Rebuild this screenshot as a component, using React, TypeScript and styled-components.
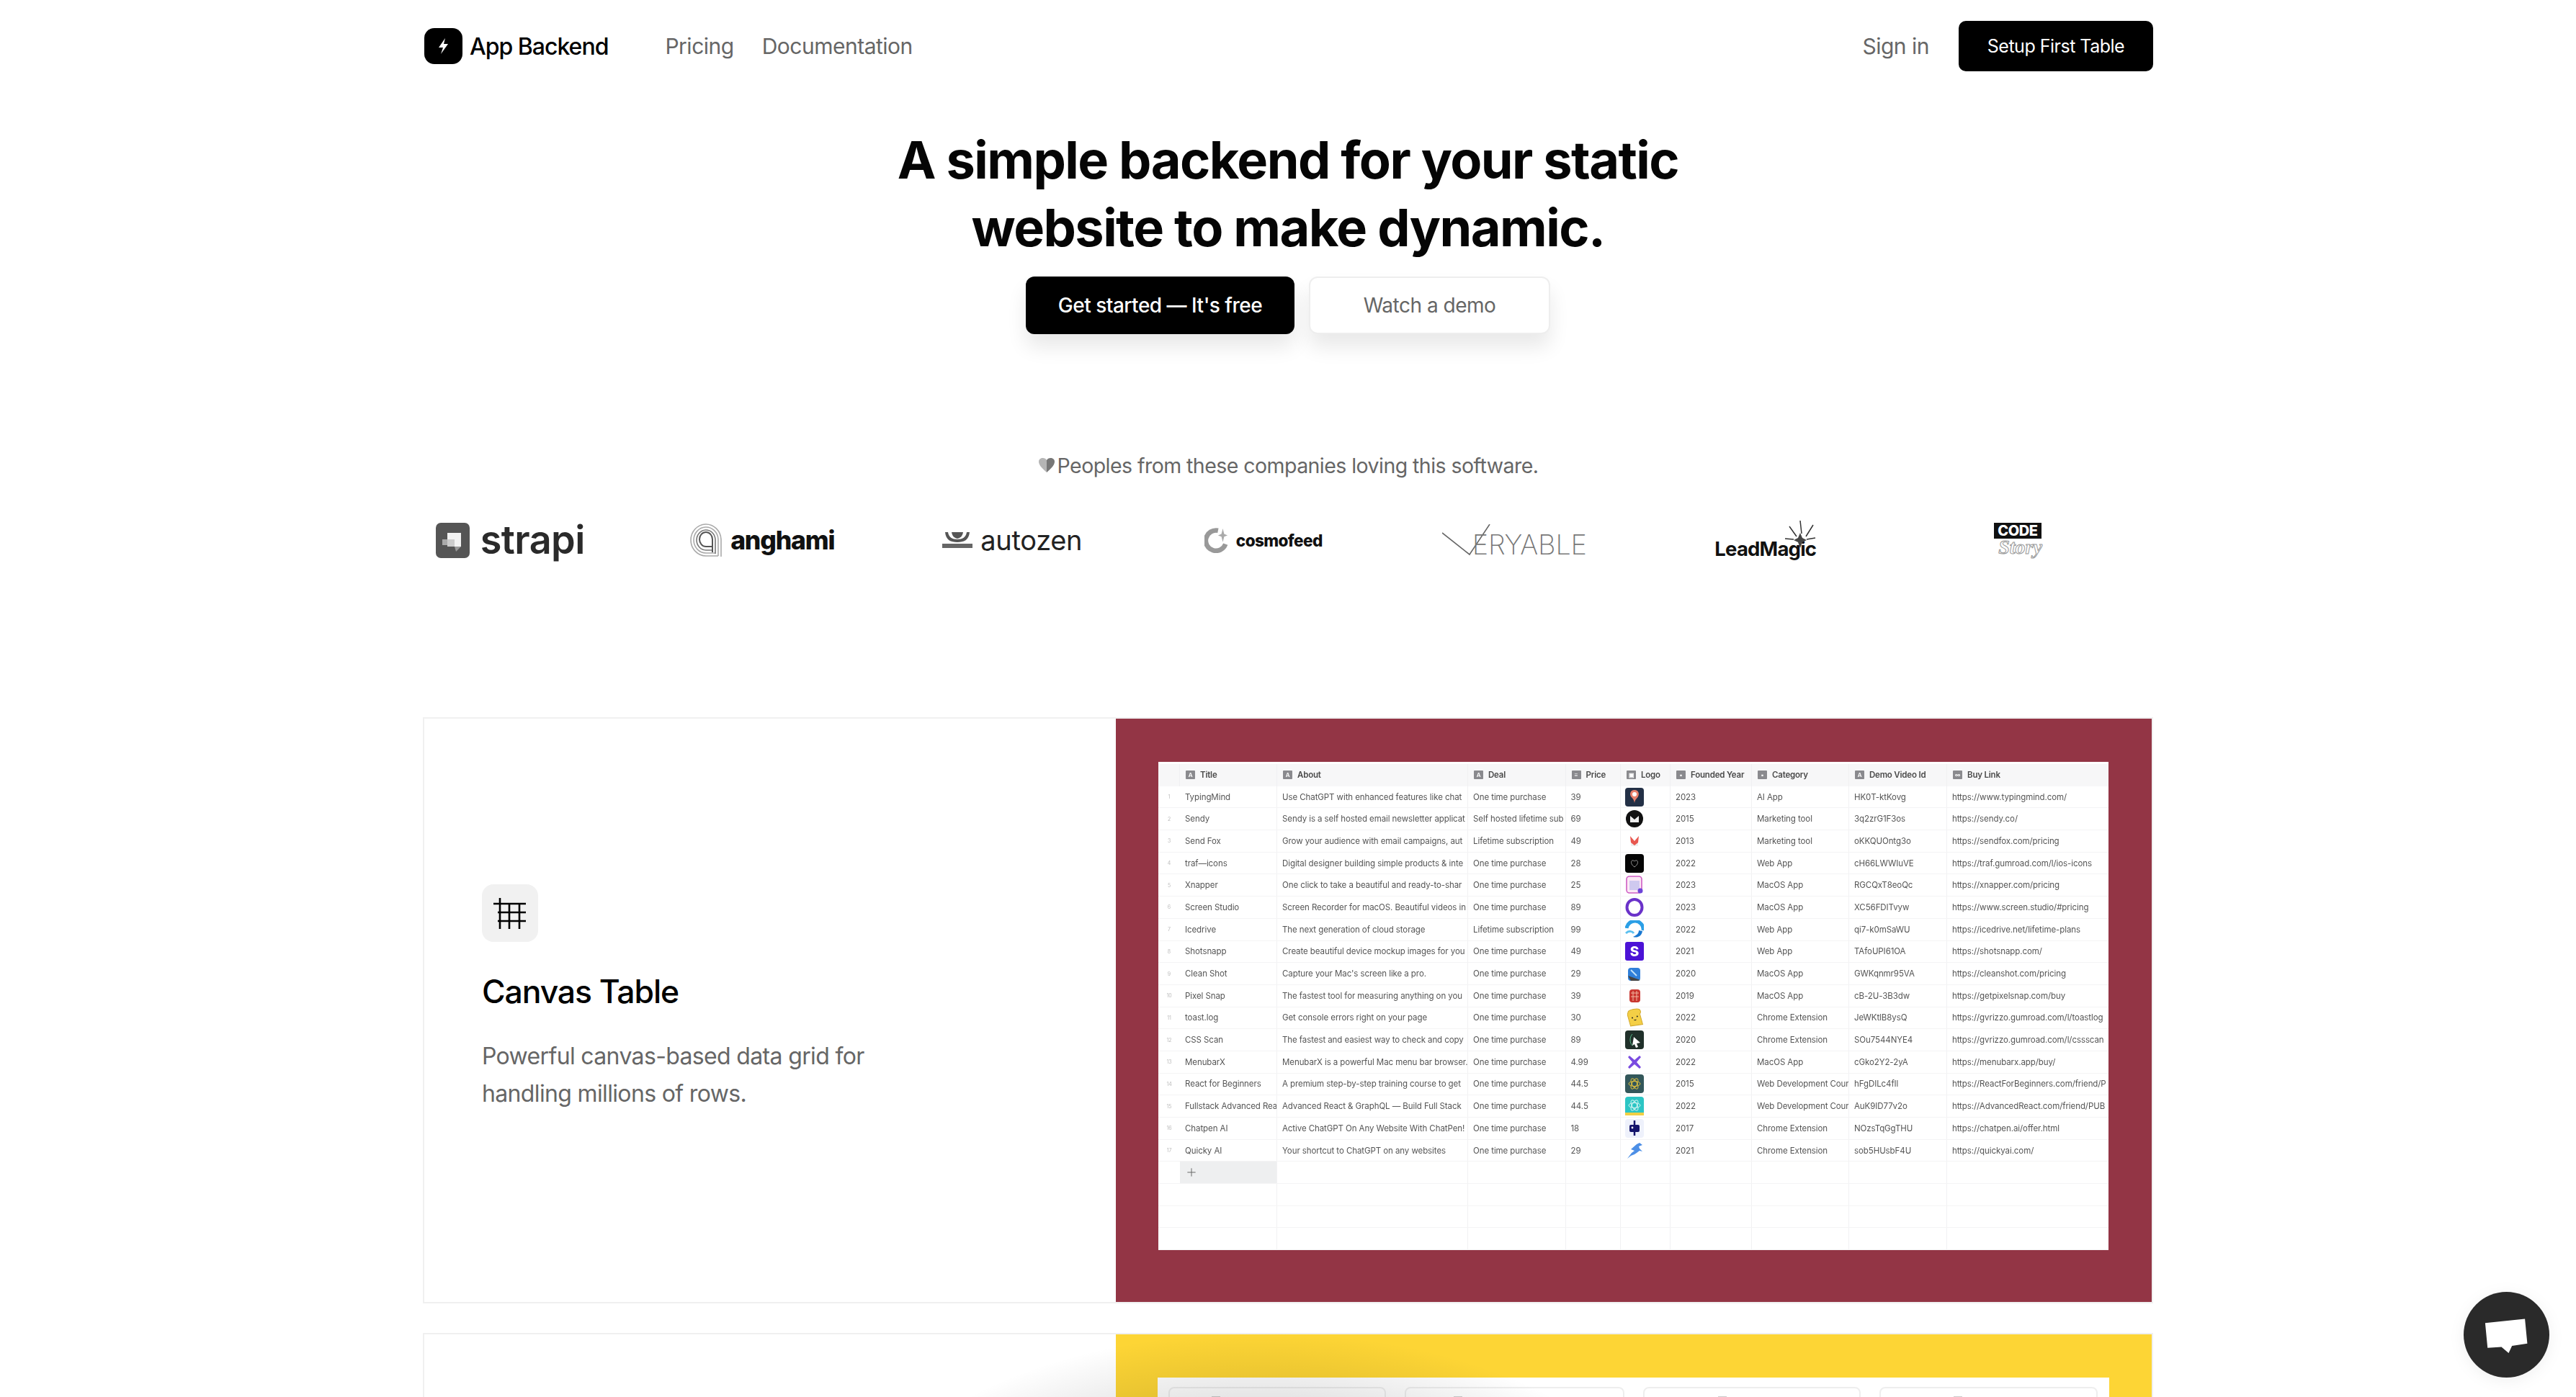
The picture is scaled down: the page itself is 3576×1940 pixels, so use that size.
import React from "react";
import styled, { createGlobalStyle } from "styled-components";
import { Plus } from "lucide-react";

const Global = createGlobalStyle`
  html, body { margin: 0; padding: 0; background: #fff; overflow: hidden; }
  * { box-sizing: border-box; }
  body { font-family: Inter, "Noto Sans", sans-serif; color: #000; }
`;

const Page = styled.div`
  height: 1940px;
  overflow: hidden;
  position: relative;
`;
const Container = styled.div`
  width: 2402px;
  margin: 0 0 0 587px;
`;
const Nav = styled.nav`
  height: 99px;
  padding: 29px 0 0 2px;
  display: flex;
  align-items: flex-start;
`;
const Brand = styled.div`
  display: flex;
  align-items: center;
  gap: 10px;
  height: 70px;
`;
const BrandName = styled.span`
  font-size: 32px;
  font-weight: 500;
  letter-spacing: -1px;
`;
const NavLinks = styled.div`
  display: flex;
  gap: 39px;
  margin-left: 79px;
  height: 70px;
  align-items: center;
`;
const NavLink = styled.a`
  font-size: 30px;
  color: #666;
  font-weight: 400;
  letter-spacing: -0.5px;
`;
const NavRight = styled.div`
  margin-left: auto;
  display: flex;
  align-items: center;
  gap: 41px;
`;
const NavButton = styled.button`
  height: 70px;
  width: 270px;
  border: 0;
  border-radius: 10px;
  background: #000;
  color: #fff;
  font: 400 25px Inter, sans-serif;
  letter-spacing: -0.5px;
`;
const Hero = styled.header`
  margin-top: 76px;
  display: flex;
  flex-direction: column;
  align-items: center;
`;
const Heading = styled.h1`
  margin: 0;
  font-size: 72px;
  line-height: 94px;
  font-weight: 700;
  text-align: center;
  letter-spacing: -1.55px;
  color: #050505;
`;
const HeroActions = styled.div`
  display: flex;
  gap: 20px;
  margin-top: 21px;
`;
const HeroButton = styled.button<{ $primary?: boolean }>`
  height: 80px;
  width: ${(p) => (p.$primary ? "373px" : "335px")};
  border-radius: 12px;
  font: ${(p) => (p.$primary ? 500 : 400)} 28px Inter, sans-serif;
  letter-spacing: -0.5px;
  background: ${(p) => (p.$primary ? "#000" : "#fff")};
  color: ${(p) => (p.$primary ? "#fff" : "#666")};
  border: ${(p) => (p.$primary ? "0" : "2px solid #eee")};
  box-shadow: 0 18px 28px rgba(0, 0, 0, 0.09);
`;
const Loved = styled.p`
  margin: 160px 0 0;
  height: 44px;
  display: flex;
  align-items: center;
  justify-content: center;
  font-size: 28.5px;
  color: #666;
  letter-spacing: -0.55px;
`;
const LogoRow = styled.div`
  margin: 32px 0 0 -53px;
  display: grid;
  grid-template-columns: repeat(7, 348.5px);
  height: 100px;
  align-items: center;
  justify-items: center;
`;
const LogoItem = styled.div`
  display: flex;
  align-items: center;
  position: relative;
`;
const StrapiText = styled.span`
  font: 600 54px Inter, sans-serif;
  letter-spacing: -0.6px;
  color: #2a2a2a;
  margin-left: 15px;
  line-height: 50px;
`;
const AnghamiText = styled.span`
  font: 800 35.5px Inter, sans-serif;
  letter-spacing: -1.2px;
  color: #111;
  margin-left: 9px;
`;
const AutozenText = styled.span`
  font: 400 38px Inter, sans-serif;
  letter-spacing: -0.3px;
  color: #222;
  margin-left: 11px;
`;
const CosmoText = styled.span`
  font: 800 22.5px Inter, sans-serif;
  letter-spacing: -0.6px;
  color: #111;
  margin-left: 10px;
`;
const VeryText = styled.span`
  font: 200 38px Inter, sans-serif;
  letter-spacing: -0.2px;
  color: #777;
  margin-left: -25px;
  margin-top: 12px;
`;
const LeadText = styled.span`
  font: 700 27.5px Inter, sans-serif;
  letter-spacing: -0.8px;
  color: #111;
  margin-top: 24px;
`;
const Spark = styled.svg`
  position: absolute;
  right: 0;
  top: 2px;
`;
const CodeStack = styled.div`
  display: flex;
  flex-direction: column;
  align-items: flex-start;
  width: 62px;
`;
const CodeBox = styled.span`
  background: #111;
  color: #fff;
  font: 800 20px Inter, sans-serif;
  line-height: 22px;
  padding: 0 5px;
  letter-spacing: -0.4px;
`;
const StoryText = styled.span`
  font: italic 700 28px "Liberation Serif", serif;
  line-height: 28px;
  color: #fff;
  -webkit-text-stroke: 1px #999;
  margin: -2px 0 0 6px;
`;
const Card = styled.section<{ $gap?: boolean }>`
  margin-top: ${(p) => (p.$gap ? "41px" : "196px")};
  border: 2px solid #f0f0f0;
  display: grid;
  grid-template-columns: 960px 1438px;
`;
const CardText = styled.div`
  padding: 230px 0 0 80px;
`;
const IconTile = styled.div`
  width: 78px;
  height: 80px;
  border-radius: 16px;
  background: #f1f1f1;
`;
const CardTitle = styled.h2`
  margin: 40px 0 0;
  font-size: 44.5px;
  line-height: 58px;
  font-weight: 500;
  letter-spacing: -1.1px;
`;
const CardDesc = styled.p`
  margin: 35px 0 0;
  font-size: 32px;
  line-height: 52px;
  color: #666;
  letter-spacing: -0.65px;
`;
const RedPane = styled.div`
  background: #933545;
  padding: 60px 60px 72px 59px;
`;
const Table = styled.div`
  background: #fff;
  height: 678px;
  overflow: hidden;
  padding-top: 3px;
  font-size: 11.5px;
  color: #555;
  filter: blur(0.3px);
`;
const COLS = "30px 135px 265px 135.5px 76.5px 69px 113px 135px 136px 225px";
const HeadRow = styled.div`
  display: grid;
  grid-template-columns: ${COLS};
  height: 30.7px;
  background: #f7f7f8;
`;
const HeadCell = styled.div`
  display: flex;
  align-items: center;
  gap: 7px;
  padding-left: 8px;
  border-right: 1px solid #f0f0f2;
  font-weight: 600;
  color: #4a4a4a;
  white-space: nowrap;
  overflow: hidden;
  letter-spacing: -0.2px;
`;
const TypeGlyph = styled.span`
  width: 13px;
  height: 12px;
  flex: none;
  background: #8a8a8e;
  border-radius: 1px;
  color: #fff;
  font-size: 8px;
  line-height: 12px;
  text-align: center;
`;
const Row = styled.div`
  display: grid;
  grid-template-columns: ${COLS};
  height: 30.7px;
  border-bottom: 1.5px solid #f4f4f5;
`;
const Cell = styled.div`
  display: flex;
  align-items: center;
  padding-left: 7px;
  border-right: 1px solid #f1f1f3;
  white-space: nowrap;
  overflow: hidden;
  letter-spacing: -0.08px;
`;
const NumCell = styled(Cell)`
  padding: 0;
  justify-content: center;
  font-size: 7px;
  color: #bbb;
  border-right: 0;
`;
const LogoCell = styled(Cell)`
  padding-left: 6px;
`;
const AddCell = styled(Cell)`
  background: #eeeff0;
  color: #666;
`;
const YellowPane = styled.div`
  background: #fdd535;
  padding: 60px 59px 0 58px;
  height: 200px;
`;
const Panel = styled.div`
  background: #fff;
  height: 300px;
  padding: 13px 15px;
  display: grid;
  grid-template-columns: 302px 305px 302px 303px;
  gap: 26px;
`;
const SubCard = styled.div`
  border: 2px solid #eee;
  border-radius: 8px;
  height: 200px;
  padding-top: 11px;
`;
const SubMark = styled.span<{ $left: number }>`
  display: block;
  width: 12px;
  height: 3px;
  background: #ccc;
  margin-left: ${(p) => p.$left}px;
`;
const Glow = styled.div`
  position: absolute;
  left: 1180px;
  top: 1850px;
  width: 1140px;
  height: 600px;
  pointer-events: none;
  background: radial-gradient(ellipse 570px 300px at 50% 300px, rgba(0, 0, 0, 0.33), rgba(0, 0, 0, 0) 100%);
`;
const ChatBubble = styled.button`
  position: fixed;
  right: 37px;
  bottom: 27px;
  width: 119px;
  height: 119px;
  padding: 0;
  border: 0;
  background: none;
  filter: drop-shadow(0 4px 10px rgba(0, 0, 0, 0.06));
`;

const Bolt = () => (
  <svg width="53" height="50" viewBox="0 0 53 50">
    <rect width="53" height="50" rx="14" fill="#000" />
    <polygon points="29,14 20,27 26,27 23,36 33,22 27,22" fill="#fff" />
  </svg>
);
const Heart = () => (
  <svg width="24" height="24" viewBox="0 0 24 24" style={{ marginRight: 3 }}>
    <path d="M12 22 C4 15 1 11 1 7 C1 3.5 4 2 6.5 2 C9 2 11 3 12 5 Z" fill="#b5b5b5" />
    <path d="M12 22 C20 15 23 11 23 7 C23 3.5 20 2 17.5 2 C15 2 13 3 12 5 Z" fill="#777" />
  </svg>
);
const GridIcon = () => (
  <svg width="78" height="80" viewBox="0 0 78 80" fill="none" stroke="#000" strokeWidth="2.6">
    <path d="M25 19V62M38 26V62M52 26V62M16 27H61M22 39H61M22 51H61" />
  </svg>
);
const StrapiIcon = () => (
  <svg width="47" height="49" viewBox="0 0 47 49">
    <rect width="47" height="49" rx="7" fill="#555" />
    <path d="M16 14H35V33H26V23H16Z" fill="#f2f2f2" />
    <path d="M9 23H16V31H9Z" fill="#aaa" />
    <path d="M16 23H26V33H16Z" fill="#ccc" />
    <path d="M26 33H35L28 40Z" fill="#999" />
  </svg>
);
const AnghamiIcon = () => (
  <svg width="50" height="50" viewBox="0 0 50 50" fill="none" stroke="#aaa" strokeWidth="1.6">
    <path d="M46 48V24A21 22 0 1 0 25 47H42" />
    <path d="M42 47V24A17 18 0 1 0 25 43H38" />
    <path d="M38 44V24A13 14 0 1 0 25 39H35" stroke="#777" />
    <path d="M34 42V24A9 10 0 1 0 25 34H33" stroke="#555" strokeWidth="2" />
  </svg>
);
const AutozenIcon = () => (
  <svg width="42" height="24" viewBox="0 0 42 24">
    <path d="M4 1C5 12 12 15 21 15C30 15 37 12 38 1H34C33 8 28 11 21 11C14 11 9 8 8 1Z" fill="#555" />
    <path d="M13 1H29C28 7 25 9 21 10C17 9 14 7 13 1Z" fill="#555" />
    <rect x="0" y="17" width="42" height="6" fill="#666" />
  </svg>
);
const CosmoIcon = () => (
  <svg width="34" height="36" viewBox="0 0 36 36" fill="none">
    <path d="M20 4A15 15 0 1 0 31 24" stroke="#999" strokeWidth="7" />
    <path d="M27 1L29 9L34 11L29 13L27 21L25 13L20 11L25 9Z" fill="#aaa" />
  </svg>
);
const VeryMark = () => (
  <svg width="67" height="44" viewBox="0 0 67 44" fill="none" stroke="#666" strokeWidth="1.6">
    <polyline points="0,12 38,42 66,0" />
  </svg>
);
const LeadSpark = () => (
  <Spark width="44" height="46" viewBox="0 0 44 46" fill="none" stroke="#333" strokeWidth="1.5">
    <path d="M22 0L24 18M7 8L17 22M40 6L30 22M1 25L13 26M43 24L31 26" />
    <path d="M22 17L25 24L31 27L25 30L22 38L19 30L13 27L19 24Z" fill="#444" stroke="none" />
  </Spark>
);

const RowLogo = ({ i }: { i: number }) => {
  const shapes: React.ReactNode[] = [
    <g key="0">
      <rect x="0" y="0" width="26" height="26" rx="4" fill="#233046" />
      <path d="M13 3C7 3 6 9 8 12C10 15 12 15 13 21C14 15 17 15 18 12C20 9 19 3 13 3Z" fill="#e8806c" />
      <circle cx="13" cy="9" r="3" fill="#fff" />
    </g>,
    <g key="1">
      <ellipse cx="13" cy="13" rx="12" ry="12" fill="#111" />
      <path d="M7 9L13 14L19 9V18H7Z" fill="#eee" />
    </g>,
    <g key="2">
      <rect x="8" y="13" width="10" height="7" fill="#eee" />
      <path d="M7 6L13 13L19 6L18 15L13 19L8 15Z" fill="#e8574f" />
    </g>,
    <g key="3">
      <rect width="26" height="26" rx="4" fill="#050505" />
      <path d="M13 18C9 15 8.500 13 8.500 11C8.500 9 11 8 13 10C15 8 17.500 9 17.500 11C17.500 13 17 15 13 18Z" fill="none" stroke="#999" />
    </g>,
    <g key="4">
      <rect x="2" y="1" width="21" height="23" rx="4" fill="#fbe8f6" stroke="#cf5cc3" strokeWidth="1.6" />
      <rect x="6" y="7" width="14" height="13" fill="#cfc9ef" />
      <circle cx="21" cy="21" r="3.500" fill="#6d45d8" />
    </g>,
    <ellipse key="5" cx="13" cy="13" rx="10.500" ry="11" fill="none" stroke="#6a32c9" strokeWidth="4" />,
    <g key="6" fill="none">
      <path d="M2 11C3 4 9 1 14 1C20 1 26 7 25 14" stroke="#2b9fe6" strokeWidth="5" />
      <path d="M24 15C23 22 17 25 11 23C15 21 19 19 19 14" fill="#1877d0" />
      <path d="M1 18C5 14 10 15 12 18" stroke="#5cc0f0" strokeWidth="3" />
    </g>,
    <g key="7">
      <rect width="26" height="26" rx="3" fill="#4b12d6" />
      <text x="13" y="20" textAnchor="middle" fontFamily="Inter" fontWeight="800" fontSize="19" fill="#fff">S</text>
    </g>,
    <g key="8">
      <rect x="4" y="5" width="17" height="18" rx="4" fill="#2f7fd9" />
      <path d="M4 16L21 22L18 23H8Z" fill="#444" />
      <path d="M8 8L16 16" stroke="#bfe0fa" strokeWidth="2" />
    </g>,
    <g key="9">
      <rect x="6" y="4" width="15" height="18" rx="4" fill="#c9362f" />
      <path d="M8 9H19M8 14H19M11 6V20M16 6V20" stroke="#f2b6a0" strokeWidth="1" />
    </g>,
    <g key="10" transform="rotate(-8 13 13)">
      <path d="M5 5C5 1 21 0 22 4C23 6 22 8 21 9L23 24H6L4 9C4 8 4 6 5 5Z" fill="#f4cf46" stroke="#d2a92d" />
      <circle cx="10" cy="13" r="1" fill="#222" />
      <circle cx="17" cy="12" r="1" fill="#222" />
      <path d="M12 16Q13.500 17.500 15 16" stroke="#222" fill="none" />
    </g>,
    <g key="11">
      <rect width="26" height="26" rx="4" fill="#20302a" />
      <path d="M10 5C6 9 6 17 10 21" stroke="#5b8" fill="none" />
      <path d="M12 9L21 17L16 18L18 23L15 24L13 19L10 21Z" fill="#fff" />
    </g>,
    <path key="12" d="M6 4L13 10L20 4L22 6L16 13L22 20L20 22L13 16L6 22L4 20L10 13L4 6Z" fill="#7a4be0" />,
    <g key="13" fill="none">
      <rect width="26" height="26" rx="4" fill="#33575a" />
      <ellipse cx="13" cy="13" rx="8" ry="3.500" stroke="#e2c13e" transform="rotate(60 13 13)" />
      <ellipse cx="13" cy="13" rx="8" ry="3.500" stroke="#e2c13e" transform="rotate(-60 13 13)" />
      <ellipse cx="13" cy="13" rx="8" ry="3.500" stroke="#e2c13e" />
    </g>,
    <g key="14" fill="none">
      <rect width="26" height="26" rx="4" fill="#2cc5c4" />
      <rect y="22" width="26" height="4" fill="#f0cf44" />
      <ellipse cx="13" cy="12" rx="8" ry="3.500" stroke="#d5f5f3" transform="rotate(60 13 12)" />
      <ellipse cx="13" cy="12" rx="8" ry="3.500" stroke="#d5f5f3" transform="rotate(-60 13 12)" />
      <ellipse cx="13" cy="12" rx="8" ry="3.500" stroke="#d5f5f3" />
    </g>,
    <g key="15">
      <rect width="26" height="26" rx="4" fill="#eef1fb" />
      <rect x="6" y="8" width="14" height="10" rx="2" fill="#14146b" />
      <path d="M13 2V8M13 18V23" stroke="#14146b" strokeWidth="2.500" />
      <circle cx="10" cy="12" r="1.400" fill="#fff" />
    </g>,
    <path key="16" d="M3 24L9 16L13 13L8 11L16 4L20 2L24 5L19 7L20 10L24 14L20 13L16 16L13 18L8 20Z" fill="#4d8fe6" />,
  ];
  return (
    <svg width="26" height="26" viewBox="0 0 26 26">
      {shapes[i]}
    </svg>
  );
};

const COLUMNS = [
  ["A", "Title"], ["A", "About"], ["A", "Deal"], ["≡", "Price"], ["▣", "Logo"],
  ["▪", "Founded Year"], ["▪", "Category"], ["A", "Demo Video Id"], ["∞", "Buy Link"],
];
const OT = "One time purchase";
const LS = "Lifetime subscription";
const DATA: string[][] = [
  ["TypingMind", "Use ChatGPT with enhanced features like chat", OT, "39", "2023", "AI App", "HK0T-ktKovg", "https://www.typingmind.com/"],
  ["Sendy", "Sendy is a self hosted email newsletter applicat", "Self hosted lifetime sub", "69", "2015", "Marketing tool", "3q2zrG1F3os", "https://sendy.co/"],
  ["Send Fox", "Grow your audience with email campaigns, aut", LS, "49", "2013", "Marketing tool", "oKKQUOntg3o", "https://sendfox.com/pricing"],
  ["traf—icons", "Digital designer building simple products & inte", OT, "28", "2022", "Web App", "cH66LWWIuVE", "https://traf.gumroad.com/l/ios-icons"],
  ["Xnapper", "One click to take a beautiful and ready-to-shar", OT, "25", "2023", "MacOS App", "RGCQxT8eoQc", "https://xnapper.com/pricing"],
  ["Screen Studio", "Screen Recorder for macOS. Beautiful videos in", OT, "89", "2023", "MacOS App", "XC56FDITvyw", "https://www.screen.studio/#pricing"],
  ["Icedrive", "The next generation of cloud storage", LS, "99", "2022", "Web App", "qi7-k0mSaWU", "https://icedrive.net/lifetime-plans"],
  ["Shotsnapp", "Create beautiful device mockup images for you", OT, "49", "2021", "Web App", "TAfoUPI61OA", "https://shotsnapp.com/"],
  ["Clean Shot", "Capture your Mac's screen like a pro.", OT, "29", "2020", "MacOS App", "GWKqnmr95VA", "https://cleanshot.com/pricing"],
  ["Pixel Snap", "The fastest tool for measuring anything on you", OT, "39", "2019", "MacOS App", "cB-2U-3B3dw", "https://getpixelsnap.com/buy"],
  ["toast.log", "Get console errors right on your page", OT, "30", "2022", "Chrome Extension", "JeWKtlB8ysQ", "https://gvrizzo.gumroad.com/l/toastlog"],
  ["CSS Scan", "The fastest and easiest way to check and copy", OT, "89", "2020", "Chrome Extension", "SOu7544NYE4", "https://gvrizzo.gumroad.com/l/cssscan"],
  ["MenubarX", "MenubarX is a powerful Mac menu bar browser.", OT, "4.99", "2022", "MacOS App", "cGko2Y2-2yA", "https://menubarx.app/buy/"],
  ["React for Beginners", "A premium step-by-step training course to get", OT, "44.5", "2015", "Web Development Cour", "hFgDILc4fIl", "https://ReactForBeginners.com/friend/P"],
  ["Fullstack Advanced Rea", "Advanced React & GraphQL — Build Full Stack", OT, "44.5", "2022", "Web Development Cour", "AuK9ID77v2o", "https://AdvancedReact.com/friend/PUB"],
  ["Chatpen AI", "Active ChatGPT On Any Website With ChatPen!", OT, "18", "2017", "Chrome Extension", "NOzsTqGgTHU", "https://chatpen.ai/offer.html"],
  ["Quicky AI", "Your shortcut to ChatGPT on any websites", OT, "29", "2021", "Chrome Extension", "sob5HUsbF4U", "https://quickyai.com/"],
];

const BlankCells = () => (
  <>
    {Array.from({ length: 8 }).map((_, i) => (
      <Cell key={i} />
    ))}
  </>
);

export default function App() {
  return (
    <Page>
      <Global />
      <Container>
        <Nav>
          <Brand>
            <Bolt />
            <BrandName>App Backend</BrandName>
          </Brand>
          <NavLinks>
            <NavLink>Pricing</NavLink>
            <NavLink>Documentation</NavLink>
          </NavLinks>
          <NavRight>
            <NavLink>Sign in</NavLink>
            <NavButton>Setup First Table</NavButton>
          </NavRight>
        </Nav>
        <Hero>
          <Heading>
            A simple backend for your static
            <br />
            website to make dynamic.
          </Heading>
          <HeroActions>
            <HeroButton $primary>Get started — It's free</HeroButton>
            <HeroButton>Watch a demo</HeroButton>
          </HeroActions>
        </Hero>
        <Loved>
          <Heart />
          Peoples from these companies loving this software.
        </Loved>
        <LogoRow>
          <LogoItem><StrapiIcon /><StrapiText>strapi</StrapiText></LogoItem>
          <LogoItem><AnghamiIcon /><AnghamiText>anghami</AnghamiText></LogoItem>
          <LogoItem><AutozenIcon /><AutozenText>autozen</AutozenText></LogoItem>
          <LogoItem><CosmoIcon /><CosmoText>cosmofeed</CosmoText></LogoItem>
          <LogoItem><VeryMark /><VeryText>ERYABLE</VeryText></LogoItem>
          <LogoItem><LeadText>LeadMagic</LeadText><LeadSpark /></LogoItem>
          <LogoItem>
            <CodeStack>
              <CodeBox>CODE</CodeBox>
              <StoryText>Story</StoryText>
            </CodeStack>
          </LogoItem>
        </LogoRow>
        <Card>
          <CardText>
            <IconTile><GridIcon /></IconTile>
            <CardTitle>Canvas Table</CardTitle>
            <CardDesc>
              Powerful canvas-based data grid for
              <br />
              handling millions of rows.
            </CardDesc>
          </CardText>
          <RedPane>
            <Table>
              <HeadRow>
                <HeadCell />
                {COLUMNS.map(([g, label]) => (
                  <HeadCell key={label}>
                    <TypeGlyph>{g}</TypeGlyph>
                    {label}
                  </HeadCell>
                ))}
              </HeadRow>
              {DATA.map((r, i) => (
                <Row key={r[0]}>
                  <NumCell>{i + 1}</NumCell>
                  <Cell>{r[0]}</Cell>
                  <Cell>{r[1]}</Cell>
                  <Cell>{r[2]}</Cell>
                  <Cell>{r[3]}</Cell>
                  <LogoCell><RowLogo i={i} /></LogoCell>
                  <Cell>{r[4]}</Cell>
                  <Cell>{r[5]}</Cell>
                  <Cell>{r[6]}</Cell>
                  <Cell>{r[7]}</Cell>
                </Row>
              ))}
              <Row>
                <NumCell />
                <AddCell><Plus size={18} strokeWidth={1.3} /></AddCell>
                <BlankCells />
              </Row>
              {[0, 1, 2].map((k) => (
                <Row key={k}>
                  <NumCell />
                  <Cell />
                  <BlankCells />
                </Row>
              ))}
            </Table>
          </RedPane>
        </Card>
        <Card $gap>
          <div />
          <YellowPane>
            <Panel>
              <SubCard><SubMark $left={58} /></SubCard>
              <SubCard><SubMark $left={66} /></SubCard>
              <SubCard><SubMark $left={102} /></SubCard>
              <SubCard><SubMark $left={101} /></SubCard>
            </Panel>
          </YellowPane>
        </Card>
      </Container>
      <Glow />
      <ChatBubble aria-label="Chat">
        <svg width="119" height="119" viewBox="60 42 358 358">
          <circle cx="239" cy="221" r="179" fill="#2a2a2a" />
          <polygon points="150,172 316,155 326,258 262,268 248,298 218,272 160,276" fill="#fff" />
        </svg>
      </ChatBubble>
    </Page>
  );
}
